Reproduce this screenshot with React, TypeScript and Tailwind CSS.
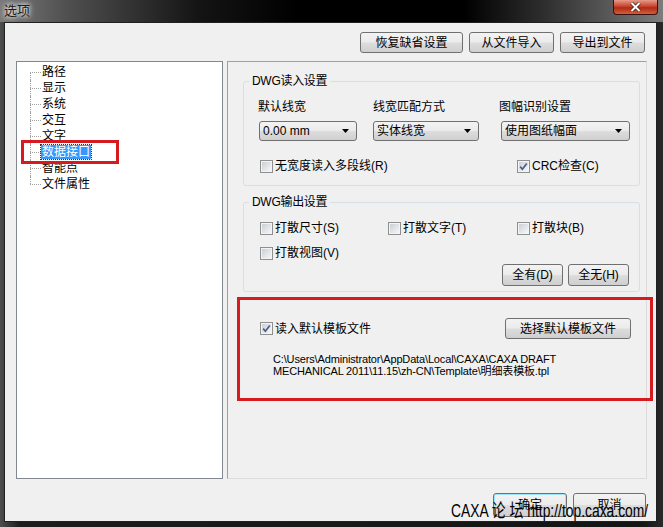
import React from "react";

function Btn({ children, className }: { children: React.ReactNode; className: string }) {
  return (
    <div
      className={`flex items-center justify-center rounded-[3px] border border-[#707070] bg-[linear-gradient(#f3f3f3,#ebebeb_48%,#dddddd_52%,#cfcfcf)] text-[12px] leading-[14px] text-black ${className}`}
    >
      {children}
    </div>
  );
}

function Cb({ checked }: { checked?: boolean }) {
  return (
    <span className="flex h-[13px] w-[13px] shrink-0 items-center justify-center border border-[#8e8f8f] bg-white">
      <span className="flex h-[11px] w-[11px] items-center justify-center border border-[#f4f4f4] bg-[linear-gradient(135deg,#cbcfd5,#f6f6f6)]">
        {checked && (
          <svg width="9" height="9" viewBox="0 0 9 9">
            <path d="M1.2 4.6 L3.4 7.2 L7.8 1.4" fill="none" stroke="#4a5d8a" strokeWidth="1.7" />
          </svg>
        )}
      </span>
    </span>
  );
}

function CbLabel({ checked, label, className }: { checked?: boolean; label: string; className: string }) {
  return (
    <div className={`flex h-[14px] items-center gap-[2px] text-[12px] leading-[14px] ${className}`}>
      <Cb checked={checked} />
      <span>{label}</span>
    </div>
  );
}

function Combo({ value, className }: { value: string; className: string }) {
  return (
    <div
      className={`flex h-[20px] items-center justify-between rounded-[3px] border border-[#707070] bg-[linear-gradient(#f3f3f3,#ebebeb_48%,#dddddd_52%,#cfcfcf)] pl-[3px] pr-[7px] text-[12px] leading-[14px] ${className}`}
    >
      <span>{value}</span>
      <svg width="7" height="4" viewBox="0 0 7 4">
        <path d="M0 0 H7 L3.5 4 Z" fill="#000" />
      </svg>
    </div>
  );
}

const treeItems = ["路径", "显示", "系统", "交互", "文字", "数据接口", "智能点", "文件属性"];

function Tree() {
  return (
    <div className="h-[418px] w-[207px] shrink-0 border border-[#828790] bg-white pt-[2px] pl-[13px]">
      {treeItems.map((t, i) => {
        const last = i === treeItems.length - 1;
        const sel = t === "数据接口";
        return (
          <div key={t} className="flex h-[16px]">
            <div className="flex w-[11px] shrink-0 flex-col">
              <div className={`h-[8px] ${i === 0 ? "" : "border-l border-dotted border-[#a0a0a0]"}`} />
              <div
                className={`h-[8px] border-t border-dotted border-[#a0a0a0] ${last ? "" : "border-l"}`}
              />
            </div>
            <div className="flex items-center">
              <span
                className={`px-[1px] text-[12px] leading-[14px] ${
                  sel ? "bg-[#3399ff] text-white outline-1 outline-dotted outline-[#333]" : "text-black"
                }`}
              >
                {t}
              </span>
            </div>
          </div>
        );
      })}
    </div>
  );
}

function Group({ title, children, className }: { title: string; children: React.ReactNode; className: string }) {
  return (
    <div className={`relative w-[397px] rounded-[3px] border border-[#d5dfe5] ${className}`}>
      <span className="absolute -top-[8px] left-[5px] bg-[#f0f0f0] px-[3px] text-[12px] leading-[14px] tracking-[-0.3px]">
        {title}
      </span>
      {children}
    </div>
  );
}

export default function App() {
  return (
    <div className="relative flex h-[527px] w-[663px] flex-col overflow-hidden bg-[linear-gradient(90deg,#4e4e4e,#1c1c1c_3%,#141414_97%,#2a2a2a)] font-['Liberation_Sans','Noto_Sans_CJK_SC',sans-serif] text-black">
      {/* Title bar */}
      <div className="flex h-[22px] shrink-0 items-center bg-[linear-gradient(90deg,#7a7a7a_0%,#505050_10%,#141414_30%,#000_45%,#000_70%,#2e2e2e_82%,#7c7c7c_100%)] pl-[4px]">
        <span className="text-[13px] leading-[16px] text-[#1a1a1a] [text-shadow:0_0_4px_#ffffff,0_0_6px_#ffffff]">
          选项
        </span>
      </div>
      <div className="absolute right-[5px] top-0 flex h-[15px] w-[45px] items-center justify-center rounded-b-[4px] border border-t-0 border-[#3a1010] bg-[linear-gradient(#e89a8a,#c8442e_45%,#b02a14_55%,#d0603c)]">
        <svg width="11" height="10" viewBox="0 0 11 10">
          <path d="M1.5 1 L9.5 9 M9.5 1 L1.5 9" stroke="#3a1a14" strokeWidth="3.4" />
          <path d="M1.5 1 L9.5 9 M9.5 1 L1.5 9" stroke="#ffffff" strokeWidth="2" />
        </svg>
      </div>

      {/* Content */}
      <div className="ml-[4px] mr-[6px] mb-[5px] flex flex-1 flex-col border border-[#202020] bg-[#f0f0f0]">
        <div className="flex justify-end gap-[6px] pt-[9px] pr-[11px]">
          <Btn className="h-[21px] w-[103px]">恢复缺省设置</Btn>
          <Btn className="h-[21px] w-[85px]">从文件导入</Btn>
          <Btn className="h-[21px] w-[85px]">导出到文件</Btn>
        </div>

        <div className="mt-[8px] flex gap-[4px] pl-[11px]">
          <Tree />
          <div className="h-[418px] w-[420px] border border-[#a0a0a0] border-r-[#dcdcdc] border-b-[#dcdcdc] pl-[15px]">
            <Group title="DWG读入设置" className="mt-[19px]">
              <div className="flex pt-[18px] pl-[14px] text-[12px] leading-[14px]">
                <span className="w-[115px]">默认线宽</span>
                <span className="w-[126px]">线宽匹配方式</span>
                <span>图幅识别设置</span>
              </div>
              <div className="mt-[7px] flex pl-[15px]">
                <div className="w-[114px]">
                  <Combo value="0.00 mm" className="w-[98px] text-[11px]" />
                </div>
                <div className="w-[128px]">
                  <Combo value="实体线宽" className="w-[106px]" />
                </div>
                <Combo value="使用图纸幅面" className="w-[129px]" />
              </div>
              <div className="mt-[18px] flex pb-[12px] pl-[16px]">
                <CbLabel label="无宽度读入多段线(R)" className="w-[257px]" />
                <CbLabel checked label="CRC检查(C)" className="" />
              </div>
            </Group>

            <Group title="DWG输出设置" className="mt-[16px]">
              <div className="flex pt-[18px] pl-[16px]">
                <CbLabel label="打散尺寸(S)" className="w-[128px]" />
                <CbLabel label="打散文字(T)" className="w-[129px]" />
                <CbLabel label="打散块(B)" className="" />
              </div>
              <div className="mt-[11px] flex pl-[16px]">
                <CbLabel label="打散视图(V)" className="" />
              </div>
              <div className="mt-[4px] flex justify-end gap-[5px] pb-[5px] pr-[10px]">
                <Btn className="h-[22px] w-[61px]">全有(D)</Btn>
                <Btn className="h-[22px] w-[61px]">全无(H)</Btn>
              </div>
            </Group>

            <div className="mt-[26px] w-[397px]">
              <div className="flex h-[21px] items-center justify-between pl-[17px] pr-[9px]">
                <CbLabel checked label="读入默认模板文件" className="" />
                <Btn className="h-[21px] w-[126px]">选择默认模板文件</Btn>
              </div>
              <div className="mt-[14px] pl-[30px] text-[11px] leading-[12px] tracking-[-0.15px]">
                <div>C:\Users\Administrator\AppData\Local\CAXA\CAXA DRAFT</div>
                <div>MECHANICAL 2011\11.15\zh-CN\Template\明细表模板.tpl</div>
              </div>
            </div>
          </div>
        </div>

        <div className="mt-[14px] flex justify-end gap-[6px] pr-[10px]">
          <Btn className="h-[24px] w-[74px] border-[#3c7fb1] shadow-[inset_0_0_0_1px_#9fe4f8]">确定</Btn>
          <Btn className="h-[24px] w-[73px]">取消</Btn>
        </div>
      </div>

      {/* annotation overlays */}
      <div className="absolute left-[21px] top-[140px] h-[24px] w-[98px] border-[3px] border-[#d51a20]" />
      <div className="absolute left-[237px] top-[297px] h-[104px] w-[416px] border-[3px] border-[#d51a20]" />
      <div className="absolute left-[451px] top-[500px] origin-left scale-x-[0.77] whitespace-nowrap text-[18px] leading-[22px] text-black">
        CAXA 论 坛 http://top.caxa.com/
      </div>
    </div>
  );
}
